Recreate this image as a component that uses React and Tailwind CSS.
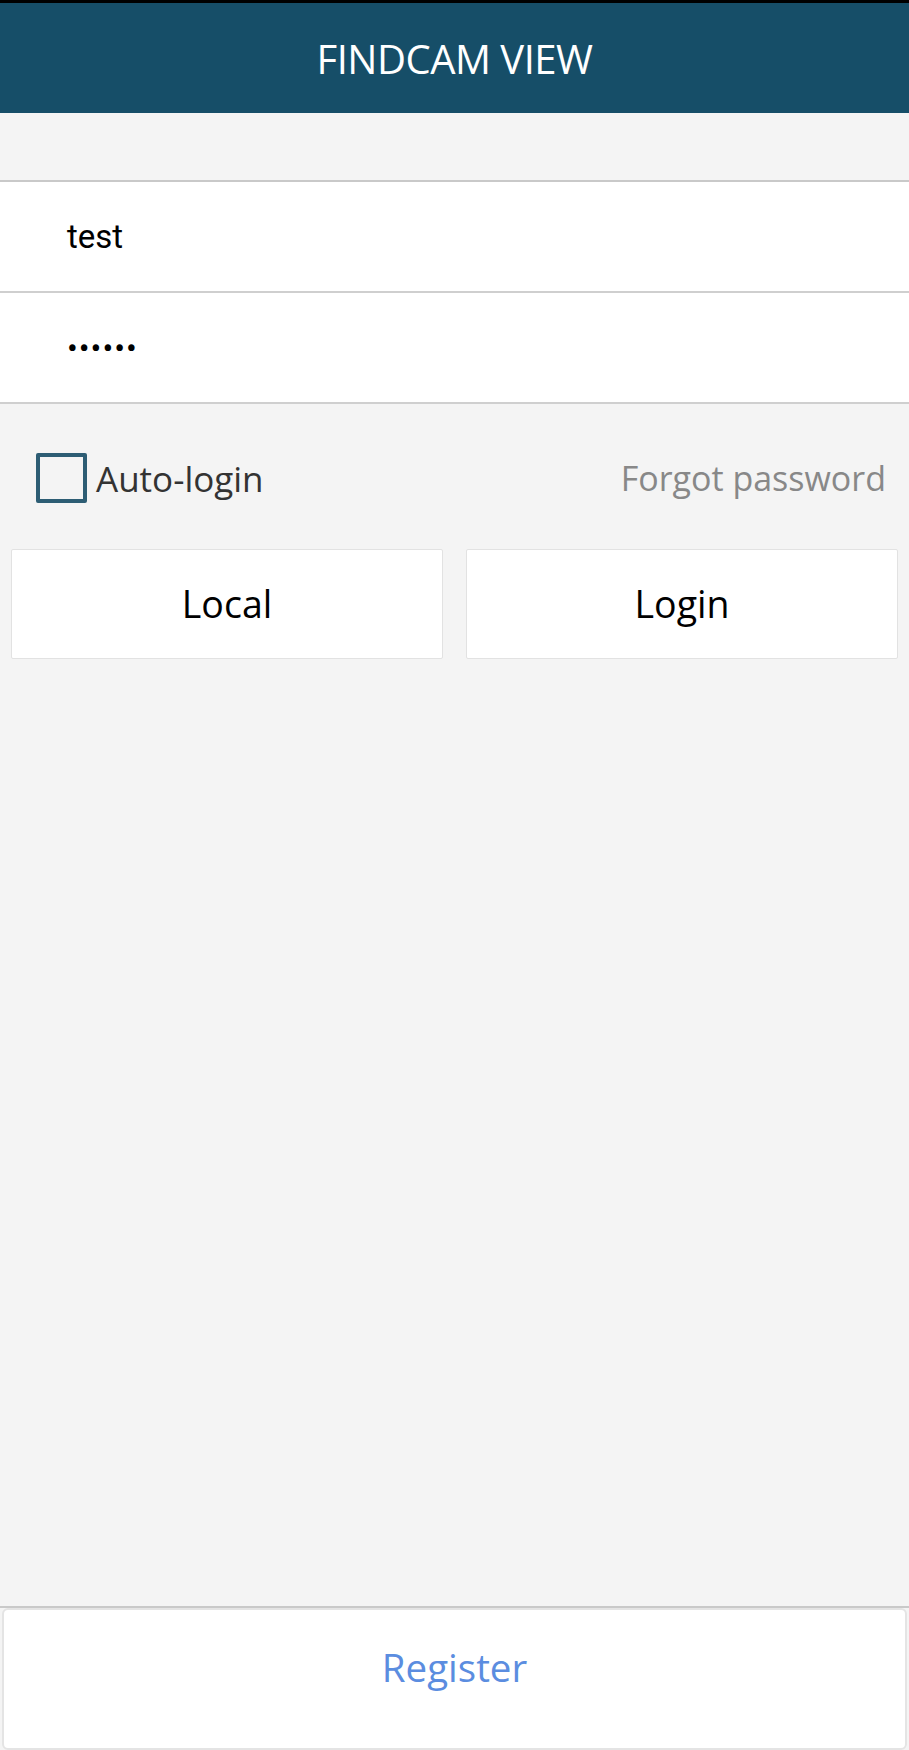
import React, { useState } from 'react';

const slate = { fontFamily: '"Open Sans", "Noto Sans", sans-serif' };
const roboto = { fontFamily: 'Roboto, "Noto Sans", sans-serif' };

const Field = ({ children }) => (
  <div className="h-[111px] bg-white flex items-center pl-[67px] border-b-2 border-[#cfcfcf]">
    {children}
  </div>
);

const App = () => {
  const [autoLogin, setAutoLogin] = useState(false);

  return (
    <div className="min-h-[1750px] h-[1750px] bg-[#f4f4f4] flex flex-col" style={slate}>
      <div className="h-[3px] bg-black" />
      <header className="h-[110px] bg-[#164e68] flex items-center justify-center">
        <h1 className="text-[40px] text-white font-normal leading-none tracking-[-0.5px] mt-[2px]">FINDCAM VIEW</h1>
      </header>

      <div className="h-[67px]" />

      {/* Account fields */}
      <div className="border-t-2 border-[#c9c9c9]">
        <Field>
          <span className="text-[33px] text-black leading-none" style={roboto}>test</span>
        </Field>
        <Field>
          <span className="text-[32px] text-black leading-none tracking-[1px]" style={roboto}>••••••</span>
        </Field>
      </div>

      <div className="flex items-center justify-between pl-[36px] pr-[23px] mt-[49px] h-[50px]">
        <label className="flex items-center gap-[9px] cursor-pointer" onClick={() => setAutoLogin(!autoLogin)}>
          <span className="w-[51px] h-[50px] border-[4px] border-[#2d5d74] rounded-[2px] flex items-center justify-center">
            {autoLogin && <span className="w-[26px] h-[26px] bg-[#2d5d74]" />}
          </span>
          <span className="text-[35px] text-[#333333] leading-none">Auto-login</span>
        </label>
        <span className="text-[34px] text-[#888888] leading-none">Forgot password</span>
      </div>

      <div className="grid grid-cols-2 gap-[23px] px-[11px] mt-[46px]">
        <button className="h-[110px] bg-white border border-[#e2e2e2] rounded-[2px] text-[37.5px] text-black leading-none">
          Local
        </button>
        <button className="h-[110px] bg-white border border-[#e2e2e2] rounded-[2px] text-[37.5px] text-black leading-none">
          Login
        </button>
      </div>

      <div className="flex-1" />

      <div className="border-t-2 border-[#c9c9c9] h-[144px] px-[2px]">
        <button className="w-full h-full bg-white border-2 border-[#e4e4e4] rounded-[6px] flex justify-center pt-[38px] text-[38.5px] text-[#5b8de0] leading-none">
          Register
        </button>
      </div>
    </div>
  );
};

export default App;
